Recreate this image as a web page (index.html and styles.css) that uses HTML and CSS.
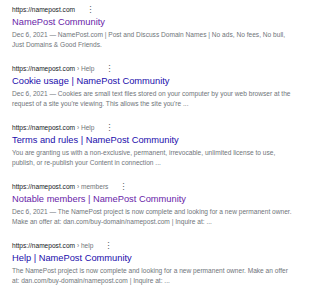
FILE: index.html
```html
<!DOCTYPE html>
<html lang="en">
<head>
  <meta charset="UTF-8" />
  <title>namepost - Search</title>
  <link rel="stylesheet" href="styles.css">
</head>
<body>
  <div class="results">
    <div class="result">
      <div class="cite"><span>https://namepost.com</span><span class="more">&#8942;</span></div>
      <a href="#" class="title visited">NamePost Community</a>
      <div class="snippet">Dec 6, 2021 — NamePost.com | Post and Discuss Domain Names | No ads, No fees, No bull, Just Domains &amp; Good Friends.</div>
    </div>

    <div class="result">
      <div class="cite"><span>https://namepost.com <span class="crumb">› Help</span></span><span class="more">&#8942;</span></div>
      <a href="#" class="title">Cookie usage | NamePost Community</a>
      <div class="snippet">Dec 6, 2021 — Cookies are small text files stored on your computer by your web browser at the request of a site you're viewing. This allows the site you're ...</div>
    </div>

    <div class="result">
      <div class="cite"><span>https://namepost.com <span class="crumb">› Help</span></span><span class="more">&#8942;</span></div>
      <a href="#" class="title">Terms and rules | NamePost Community</a>
      <div class="snippet">You are granting us with a non-exclusive, permanent, irrevocable, unlimited license to use, publish, or re-publish your Content in connection ...</div>
    </div>

    <div class="result">
      <div class="cite"><span>https://namepost.com <span class="crumb">› members</span></span><span class="more">&#8942;</span></div>
      <a href="#" class="title visited">Notable members | NamePost Community</a>
      <div class="snippet">Dec 6, 2021 — The NamePost project is now complete and looking for a new permanent owner. Make an offer at: dan.com/buy-domain/namepost.com | Inquire at: ...</div>
    </div>

    <div class="result">
      <div class="cite"><span>https://namepost.com <span class="crumb">› help</span></span><span class="more">&#8942;</span></div>
      <a href="#" class="title">Help | NamePost Community</a>
      <div class="snippet">The NamePost project is now complete and looking for a new permanent owner. Make an offer at: dan.com/buy-domain/namepost.com | Inquire at: ...</div>
    </div>
  </div>
</body>
</html>
```

FILE: styles.css
```css
* { margin: 0; padding: 0; box-sizing: border-box; }
body { background: #fff; font-family: "Liberation Sans", Arial, sans-serif; }

.results {
  display: flex; flex-direction: column; gap: 14px;
  padding: 5px 0 0 12px; width: 300px;
}

.result { height: 45px; }

.cite {
  font-size: 6.6px; line-height: 10px; color: #202124;
  display: flex; align-items: center; gap: 11px;
}
.crumb { color: #70757a; }
.more { color: #5f6368; font-size: 8.5px; line-height: 10px; }

.title {
  display: block; font-size: 9.3px; line-height: 15px;
  color: #1a0dab; text-decoration: none;
}
.title.visited { color: #681da8; }

.snippet {
  font-size: 6.6px; line-height: 10px; color: #70757a;
  width: 280px;
}
```
